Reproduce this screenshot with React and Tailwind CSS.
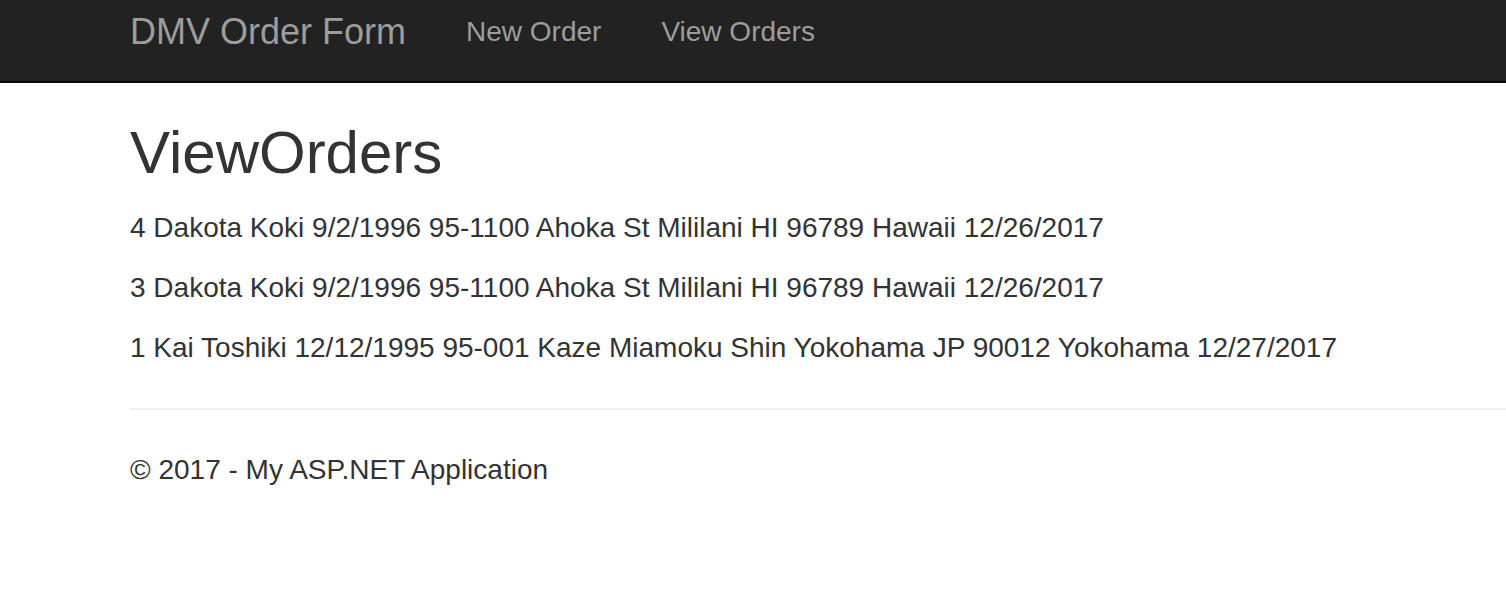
export default function App() {
  const rows = [
    "4 Dakota Koki 9/2/1996 95-1100 Ahoka St Mililani HI 96789 Hawaii 12/26/2017",
    "3 Dakota Koki 9/2/1996 95-1100 Ahoka St Mililani HI 96789 Hawaii 12/26/2017",
    "1 Kai Toshiki 12/12/1995 95-001 Kaze Miamoku Shin Yokohama JP 90012 Yokohama 12/27/2017",
  ];
  return (
    <div
      className="min-h-[589px] w-full overflow-hidden bg-white text-[#333]"
      style={{ fontFamily: '"Liberation Sans", Arial, sans-serif' }}
    >
      <div className="h-[83px] border-b-2 border-[#080808] bg-[#222]">
        <div className="flex items-start pl-[130px] pt-[12px]">
          <span className="mr-[30px] whitespace-nowrap text-[36px] leading-[40px] text-[#9d9d9d]">
            DMV Order Form
          </span>
          <span className="whitespace-nowrap px-[30px] text-[28px] leading-[40px] text-[#9d9d9d]">
            New Order
          </span>
          <span className="whitespace-nowrap px-[30px] text-[28px] leading-[40px] text-[#9d9d9d]">
            View Orders
          </span>
        </div>
      </div>
      <div className="pl-[130px]">
        <h2 className="mt-[37px] mb-[22px] whitespace-nowrap text-[60px] leading-[66px] font-normal">
          ViewOrders
        </h2>
        <div className="flex flex-col gap-[20px]">
          {rows.map((r) => (
            <p key={r} className="whitespace-nowrap text-[28px] leading-[40px]">
              {r}
            </p>
          ))}
        </div>
        <div className="mt-[40px] h-[2px] w-full bg-[#eee]" />
        <footer className="mt-[40px] whitespace-nowrap text-[28px] leading-[40px]">
          © 2017 - My ASP.NET Application
        </footer>
      </div>
    </div>
  );
}
